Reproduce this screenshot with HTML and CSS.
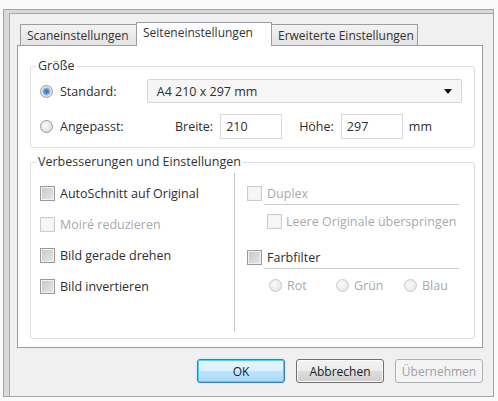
FILE: index.html
```html
<!DOCTYPE html>
<html lang="de">
<head>
  <meta charset="UTF-8">
  <title>Seiteneinstellungen</title>
  <link rel="stylesheet" href="styles.css">
</head>
<body>
  <div class="window">
    <div class="tabs">
      <div class="tab">Scaneinstellungen</div>
      <div class="tab active">Seiteneinstellungen</div>
      <div class="tab">Erweiterte Einstellungen</div>
    </div>

    <div class="panel">
      <fieldset class="group size">
        <legend>Größe</legend>
        <div class="row first">
          <label class="opt"><span class="radio on"></span>Standard:</label>
          <div class="select">A4 210 x 297 mm<span class="caret"></span></div>
        </div>
        <div class="row">
          <label class="opt"><span class="radio"></span>Angepasst:</label>
          <span class="lbl breite">Breite:</span>
          <span class="field">210</span>
          <span class="lbl hoehe">Höhe:</span>
          <span class="field">297</span>
          <span class="unit">mm</span>
        </div>
      </fieldset>

      <fieldset class="group enh">
        <legend>Verbesserungen und Einstellungen</legend>
        <div class="cols">
          <div class="col left">
            <label class="check"><span class="box"></span>AutoSchnitt auf Original</label>
            <label class="check off"><span class="box"></span>Moiré reduzieren</label>
            <label class="check"><span class="box"></span>Bild gerade drehen</label>
            <label class="check"><span class="box"></span>Bild invertieren</label>
          </div>
          <div class="col right">
            <label class="check off"><span class="box"></span>Duplex</label>
            <div class="sep"></div>
            <label class="check off sub"><span class="box"></span>Leere Originale überspringen</label>
            <label class="check farb"><span class="box"></span>Farbfilter</label>
            <div class="sep"></div>
            <div class="colors">
              <label class="choice off"><span class="radio"></span>Rot</label>
              <label class="choice off"><span class="radio"></span>Grün</label>
              <label class="choice off"><span class="radio"></span>Blau</label>
            </div>
          </div>
        </div>
      </fieldset>
    </div>

    <div class="buttons">
      <button class="btn default">OK</button>
      <button class="btn">Abbrechen</button>
      <button class="btn" disabled>Übernehmen</button>
    </div>
  </div>
</body>
</html>
```

FILE: styles.css
```css
body {
  margin: 0;
  background: #fafafa;
  font-family: 'Open Sans', 'Noto Sans', sans-serif;
  font-size: 12.5px;
  color: #2e2e2e;
}
.window {
  box-sizing: border-box;
  width: 491px;
  height: 388px;
  margin: 9px 0 0 3px;
  padding: 12px 10px 0 13px;
  background: #f0f0f0;
  border: 1px solid #a4a4a4;
  box-shadow: inset 5px 3px 0 #d9d9d9, inset 6px 4px 0 #a9a9a9;
}

/* tabs */
.tabs {
  display: flex;
  align-items: flex-end;
  height: 23px;
  padding-left: 3px;
  font-size: 12px;
}
.tab {
  box-sizing: border-box;
  height: 21px;
  padding: 2px 6px 0;
  background: linear-gradient(#f3f3f3, #e3e3e3);
  border: 1px solid #9a9ca3;
  border-bottom: none;
  line-height: 17px;
  white-space: nowrap;
  color: #333;
}
.tab:first-child {
  width: 116px;
  border-right: none;
}
.tab:last-child {
  width: 146px;
  border-left: none;
}
.tab.active {
  position: relative;
  z-index: 1;
  width: 136px;
  height: 24px;
  margin-bottom: -1px;
  padding-top: 1px;
  background: #fff;
  border: 1px solid #9a9ca3;
  border-bottom: none;
}

.panel {
  box-sizing: border-box;
  width: 466px;
  height: 303px;
  padding: 12px 7px 0 12px;
  background: #fff;
  border: 1px solid #9a9ca3;
}

/* group boxes */
.group {
  box-sizing: border-box;
  margin: 0;
  min-width: 0;
  padding: 0 12px 0 9px;
  border: 1px solid #dadfe3;
  border-radius: 3px;
}
.group legend {
  margin-left: -4px;
  padding: 0 2px;
  line-height: 16px;
  color: #333;
}
.size {
  height: 90px;
}
.enh {
  height: 185px;
  margin-top: 6px;
  padding: 3px 0 6px 9px;
}

.row {
  display: flex;
  align-items: center;
  height: 25px;
  margin-top: 11px;
}
.row.first {
  height: 24px;
  margin-top: 5px;
}
.opt {
  display: flex;
  align-items: center;
  width: 107px;
}

.radio {
  box-sizing: border-box;
  display: inline-block;
  width: 13px;
  height: 13px;
  margin-right: 7px;
  border: 1px solid #9c9c9c;
  border-radius: 50%;
  background: radial-gradient(circle at 40% 40%, #fcfcfc, #d4d4d4);
}
.radio.on {
  background: radial-gradient(circle, #2f6fb1 0, #4c8fd0 2px, #8cb8e2 3.5px, #e8e8e8 4.5px, #d0d0d0);
}
.off .radio {
  border-color: #c9c9c9;
  background: radial-gradient(circle at 40% 40%, #fafafa, #e2e2e2);
}

.select {
  box-sizing: border-box;
  display: flex;
  align-items: center;
  width: 316px;
  height: 24px;
  padding: 0 9px;
  background: #f6f6f6;
  border: 1px solid #d6d6d6;
  border-radius: 2px;
}
.caret {
  margin-left: auto;
  border-left: 4px solid transparent;
  border-right: 4px solid transparent;
  border-top: 5px solid #111;
}

.lbl.breite {
  margin-left: 28px;
}
.lbl.hoehe {
  margin-left: 17px;
}
.field {
  box-sizing: border-box;
  width: 62px;
  height: 25px;
  margin-left: 7px;
  padding: 3px 5px 0;
  background: #fff;
  border: 1px solid #d9d9d9;
  line-height: 18px;
}
.unit {
  margin-left: 6px;
}

/* columns of options */
.cols {
  display: flex;
  height: 100%;
}
.col.left {
  width: 194px;
  padding-top: 10px;
  border-right: 1px solid #c7c7c7;
}
.col.right {
  flex: 1;
  padding: 10px 0 0 12px;
}
.check {
  display: flex;
  align-items: center;
  height: 20px;
  margin-bottom: 11px;
  white-space: nowrap;
}
.col.left .check:nth-child(3) {
  margin-top: 1px;
}
.box {
  box-sizing: border-box;
  width: 15px;
  height: 15px;
  margin-right: 5px;
  border: 1px solid #9a9a9a;
  background: linear-gradient(135deg, #c6c6c6, #e9e9e9);
  box-shadow: inset 0 0 0 1px #f2f2f2;
}
.check.off {
  color: #a9a9a9;
}
.check.off .box {
  border-color: #cdcdcd;
  background: #f7f7f7;
}
.sep {
  width: 195px;
  height: 1px;
  margin: -10px 0 6px 17px;
  background: #c9c9c9;
}
.check.sub {
  margin-left: 20px;
  margin-bottom: 16px;
}
.check.sub .box {
  margin-right: 4px;
}
.colors {
  display: flex;
  margin-left: 22px;
}
.choice {
  display: flex;
  align-items: center;
  height: 20px;
  color: #a9a9a9;
}
.choice .radio {
  margin-right: 5px;
}
.choice:nth-child(1) {
  width: 67px;
}
.choice:nth-child(2) {
  width: 68px;
}

/* dialog buttons */
.buttons {
  display: flex;
  justify-content: flex-end;
  gap: 11px;
  width: 466px;
  margin-top: 11px;
}
.btn {
  box-sizing: border-box;
  width: 88px;
  height: 24px;
  padding: 0;
  font-family: inherit;
  font-size: 12px;
  color: #222;
  background: linear-gradient(#f2f2f2 0, #ebebeb 50%, #dddddd 51%, #cfcfcf 100%);
  border: 1px solid #707070;
  border-radius: 3px;
  box-shadow: inset 0 0 0 1px #fcfcfc;
}
.btn.default {
  border-color: #3c7fb1;
  background: linear-gradient(#eaf6fd 0, #d9f0fc 50%, #bee6fd 51%, #a7d9f5 100%);
  box-shadow: inset 0 0 0 1px #48d0fc, 0 0 2px #a8dcf5;
}
.btn:disabled {
  color: #a0a0a0;
  background: #f4f4f4;
  border-color: #adb2b5;
  box-shadow: none;
}
```
